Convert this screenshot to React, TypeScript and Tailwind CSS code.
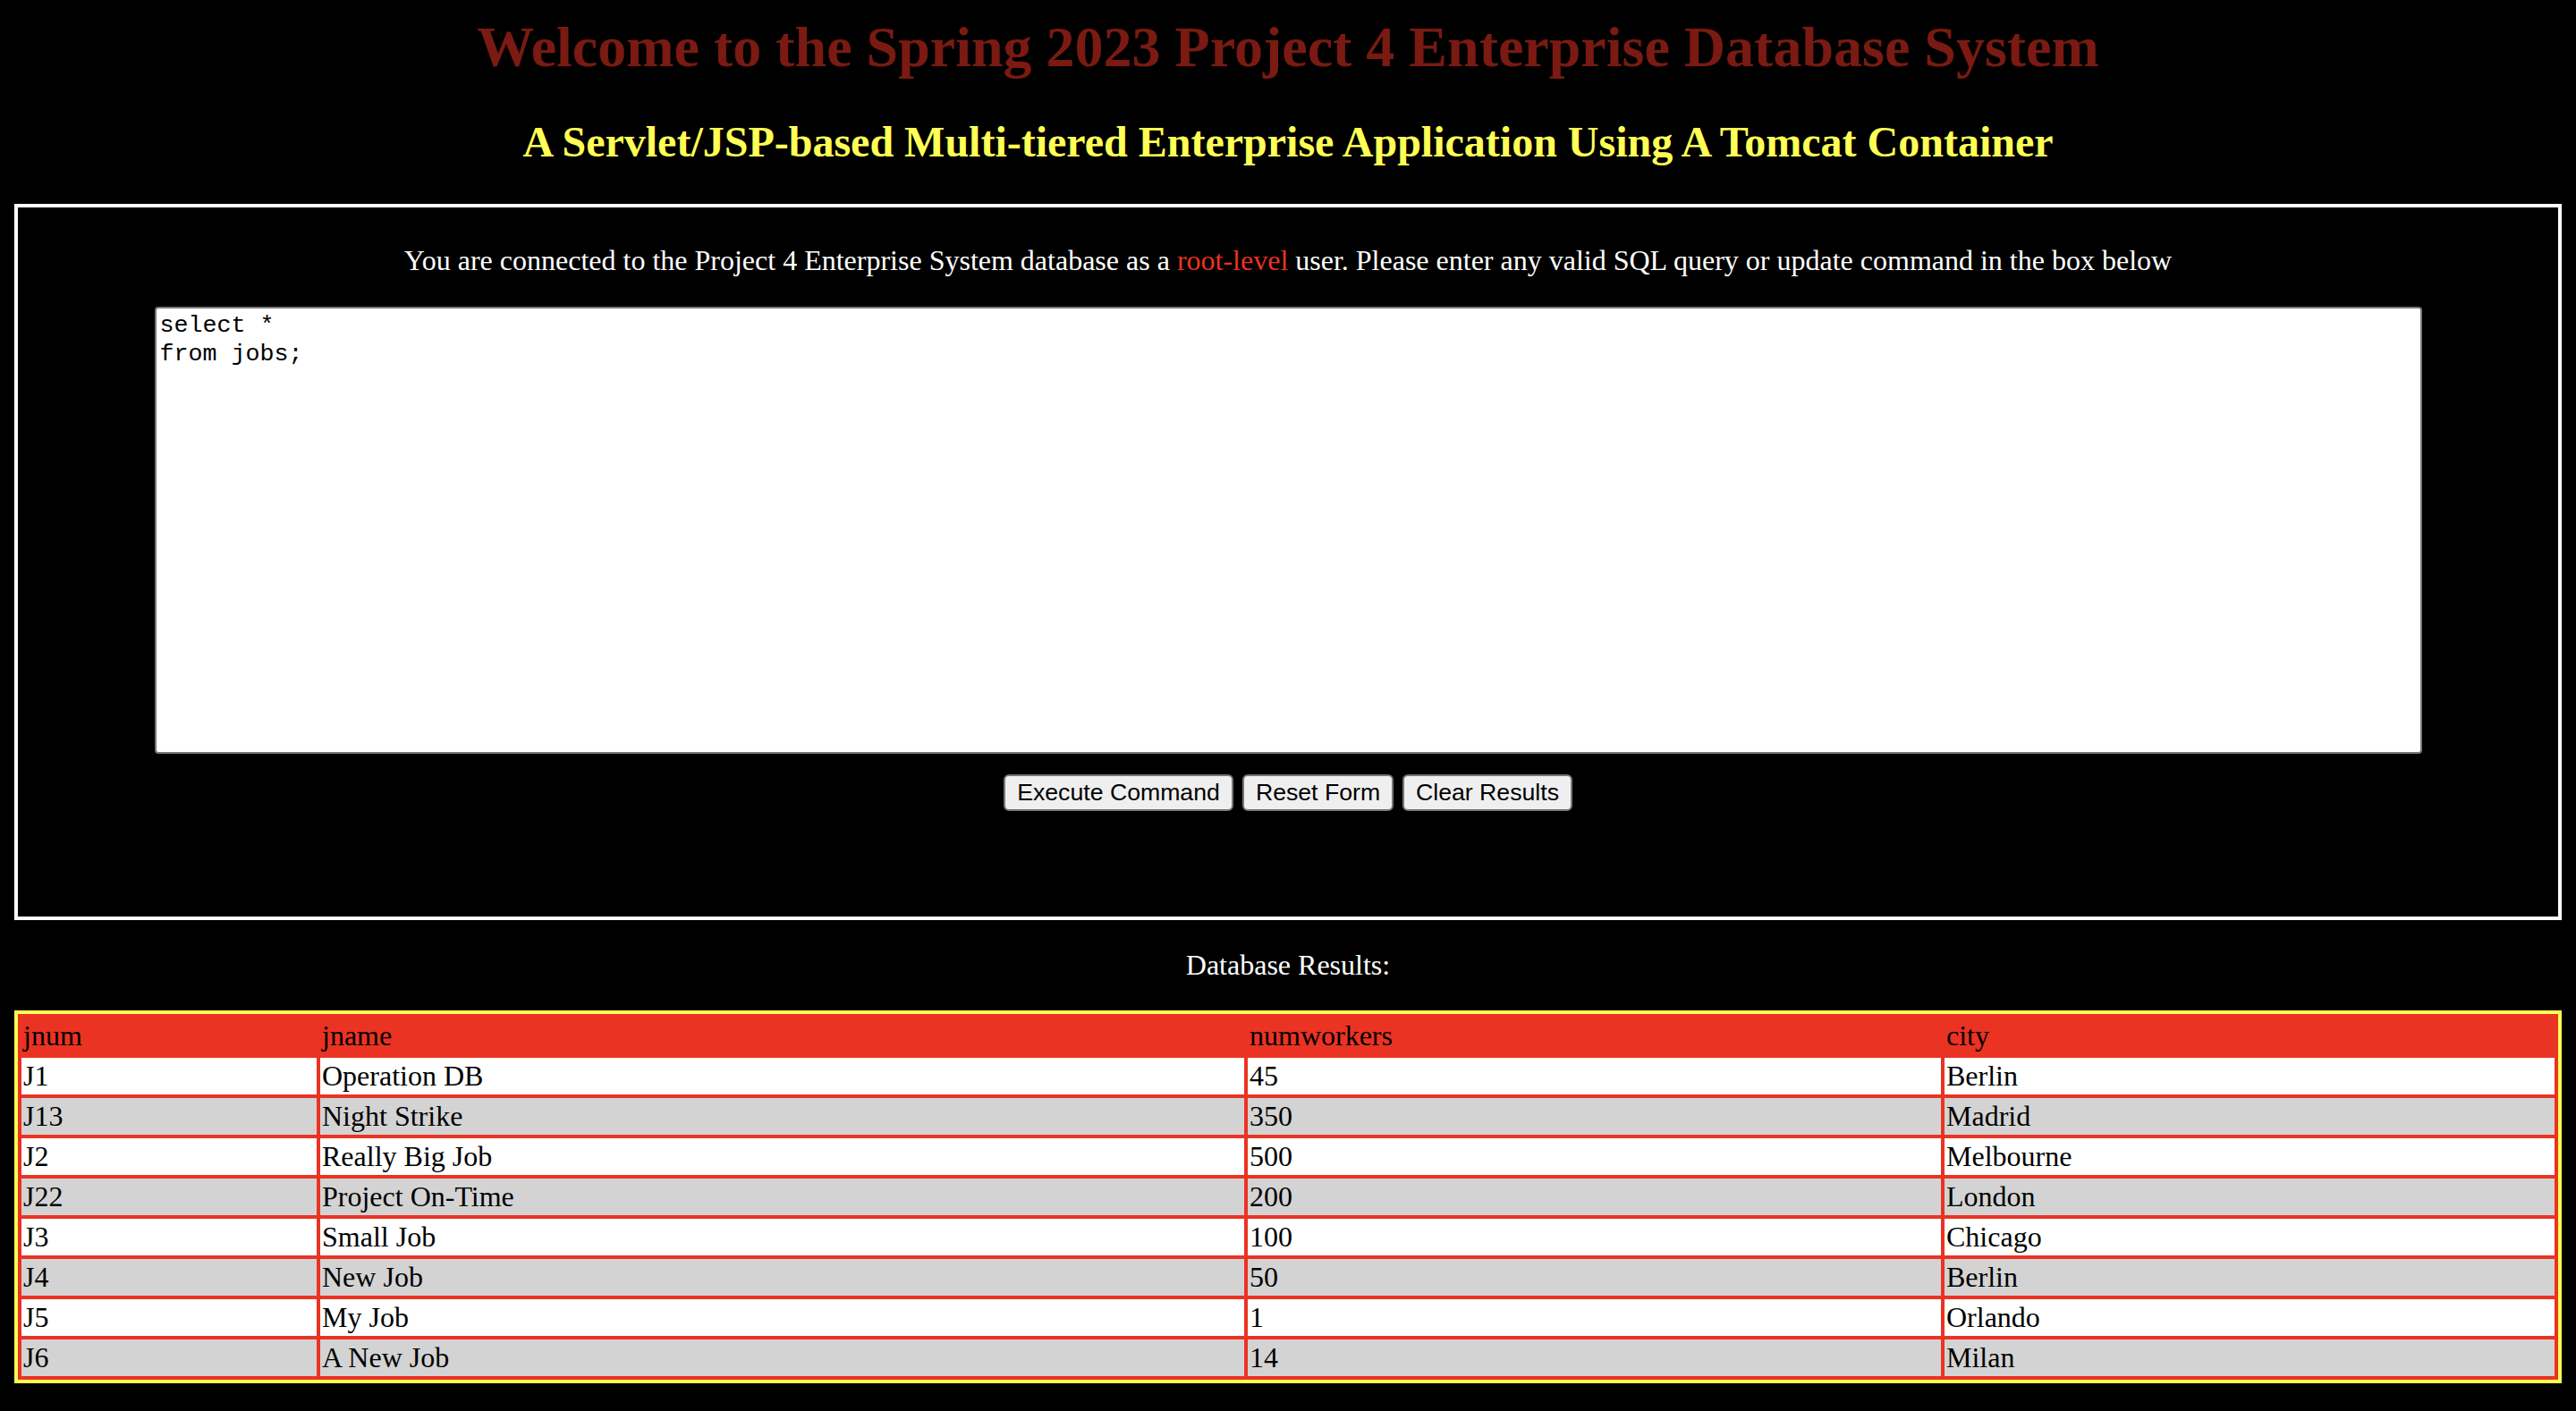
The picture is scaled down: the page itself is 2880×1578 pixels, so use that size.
const rows = [
  { jnum: "J1", jname: "Operation DB", numworkers: "45", city: "Berlin" },
  { jnum: "J13", jname: "Night Strike", numworkers: "350", city: "Madrid" },
  { jnum: "J2", jname: "Really Big Job", numworkers: "500", city: "Melbourne" },
  { jnum: "J22", jname: "Project On-Time", numworkers: "200", city: "London" },
  { jnum: "J3", jname: "Small Job", numworkers: "100", city: "Chicago" },
  { jnum: "J4", jname: "New Job", numworkers: "50", city: "Berlin" },
  { jnum: "J5", jname: "My Job", numworkers: "1", city: "Orlando" },
  { jnum: "J6", jname: "A New Job", numworkers: "14", city: "Milan" },
];

const cell = "border-r-4 border-b-4 border-[#ea3323] px-[2px] py-[2px] text-left font-normal";

const App = () => {
  return (
    <div className="min-h-screen bg-black p-[16px] font-['Liberation_Serif',serif] text-[32px] leading-[normal] text-white">
      <h1 className="text-center text-[64px] leading-[normal] font-bold text-[#7a1a12]">
        Welcome to the Spring 2023 Project 4 Enterprise Database System
      </h1>
      <h2 className="mt-[41px] mb-[42px] text-center text-[48px] leading-[normal] font-bold text-[#ffff55]">
        A Servlet/JSP-based Multi-tiered Enterprise Application Using A Tomcat Container
      </h2>

      <div className="border-4 border-white pt-[41px] pb-[118px]">
        <p className="text-center">
          You are connected to the Project 4 Enterprise System database as a{" "}
          <span className="text-[#ea3323]">root-level</span> user. Please enter any valid SQL
          query or update command in the box below
        </p>
        <div className="mt-[33px] flex justify-center">
          <textarea
            defaultValue={"select *\nfrom jobs;"}
            className="h-[500px] w-[2535px] resize-none rounded-[4px] border-2 border-[#767676] bg-white px-[4px] py-[3px] font-['Liberation_Mono',monospace] text-[26.67px] leading-[32px] text-black outline-none"
          />
        </div>
        <div className="mt-[23px] flex justify-center gap-[10px] font-['Liberation_Sans',Arial,sans-serif] text-[26.67px] leading-[normal] text-black">
          <button className="h-[41px] w-[257px] rounded-[6px] border-2 border-[#767676] bg-[#efefef]">
            Execute Command
          </button>
          <button className="h-[41px] w-[169px] rounded-[6px] border-2 border-[#767676] bg-[#efefef]">
            Reset Form
          </button>
          <button className="h-[41px] w-[190px] rounded-[6px] border-2 border-[#767676] bg-[#efefef]">
            Clear Results
          </button>
        </div>
      </div>

      <p className="mt-[32px] text-center">Database Results:</p>

      <div className="mt-[32px] border-4 border-[#fffe54]">
        <table className="w-full table-fixed border-separate border-spacing-0 border-t-4 border-l-4 border-[#ea3323] text-black">
          <thead>
            <tr className="bg-[#ea3323]">
              <th className={`${cell} w-[334px]`}>jnum</th>
              <th className={`${cell} w-[1037px]`}>jname</th>
              <th className={`${cell} w-[779px]`}>numworkers</th>
              <th className={cell}>city</th>
            </tr>
          </thead>
          <tbody>
            {rows.map((r, i) => (
              <tr key={r.jnum} className={i % 2 === 0 ? "bg-white" : "bg-[#d3d3d3]"}>
                <td className={cell}>{r.jnum}</td>
                <td className={cell}>{r.jname}</td>
                <td className={cell}>{r.numworkers}</td>
                <td className={cell}>{r.city}</td>
              </tr>
            ))}
          </tbody>
        </table>
      </div>
    </div>
  );
};

export default App;
